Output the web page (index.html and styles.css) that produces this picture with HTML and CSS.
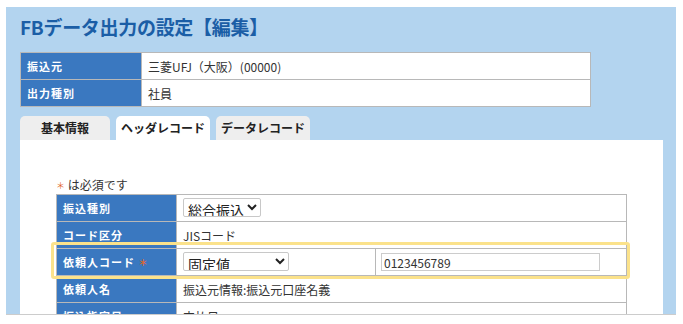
FILE: index.html
```html
<!DOCTYPE html>
<html lang="ja">
<head>
    <meta charset="UTF-8">
    <meta name="viewport" content="width=device-width, initial-scale=1.0">
    <title>FBデータ出力の設定【編集】</title>
    <link rel="stylesheet" href="styles.css">
</head>
<body>
    <div class="screen">
        <h1 class="page-title">FBデータ出力の設定【編集】</h1>

        <table class="info-table">
            <tr>
                <th>振込元</th>
                <td>三菱UFJ（大阪）(00000)</td>
            </tr>
            <tr>
                <th>出力種別</th>
                <td>社員</td>
            </tr>
        </table>

        <ul class="tabs">
            <li class="tab">基本情報</li>
            <li class="tab active">ヘッダレコード</li>
            <li class="tab">データレコード</li>
        </ul>

        <div class="tab-body">
            <p class="note"><span class="req">＊</span> は必須です</p>

            <div class="form-wrap">
                <table class="form-table">
                    <tr>
                        <th>振込種別</th>
                        <td colspan="2">
                            <select class="select-type">
                                <option>総合振込</option>
                            </select>
                        </td>
                    </tr>
                    <tr>
                        <th>コード区分</th>
                        <td colspan="2">JISコード</td>
                    </tr>
                    <tr>
                        <th>依頼人コード <span class="req">＊</span></th>
                        <td class="cell-select">
                            <select class="select-code">
                                <option>固定値</option>
                            </select>
                        </td>
                        <td>
                            <input type="text" class="code-input" value="0123456789">
                        </td>
                    </tr>
                    <tr>
                        <th>依頼人名</th>
                        <td colspan="2">振込元情報:振込元口座名義</td>
                    </tr>
                    <tr>
                        <th>振込指定日</th>
                        <td colspan="2">支払日</td>
                    </tr>
                </table>
                <!-- 注目枠 -->
                <div class="highlight"></div>
            </div>
        </div>
    </div>
</body>
</html>
```

FILE: styles.css
```css
body {
    margin: 0;
    padding: 7px 7px 0 6px;
    background-color: #fff;
    font-family: "Noto Sans CJK JP", "Noto Sans", sans-serif;
    color: #333;
}

.screen {
    box-sizing: border-box;
    width: 670px;
    height: 308px;
    padding: 0 13px 0 14px;
    background-color: #b3d4ef;
    border-bottom: 1px solid #ccc;
    overflow: hidden;
}

.page-title {
    margin: 0 0 11px;
    padding-top: 6px;
    font-size: 19px;
    line-height: 28px;
    letter-spacing: -0.3px;
    font-weight: bold;
    color: #1b5ea6;
}

table {
    border-collapse: collapse;
}

th,
td {
    height: 26px;
    padding: 0 6px;
    border: 1px solid #b8b8b8;
    font-size: 12px;
    text-align: left;
    vertical-align: middle;
}

th {
    background-color: #3a78c0;
    color: #fff;
    font-size: 11px;
    font-weight: bold;
    letter-spacing: 1px;
}

td {
    background-color: #fff;
    color: #333;
}

.info-table {
    width: 571px;
}

.info-table th {
    width: 108px;
}

.tabs {
    display: flex;
    gap: 6px;
    margin: 9px 0 0;
    padding: 0;
    list-style: none;
}

.tab {
    width: 90px;
    height: 24px;
    line-height: 24px;
    text-align: center;
    font-size: 12px;
    font-weight: bold;
    color: #222;
    background-color: #eee;
    border-radius: 5px 5px 0 0;
}

.tab + .tab {
    width: 94px;
}

.tab.active {
    background-color: #fff;
}

.tab-body {
    height: 200px;
    padding: 37px 36px 0;
    background-color: #fff;
}

.note {
    margin: 0;
    font-size: 12px;
    line-height: 16px;
    color: #333;
}

.req {
    font-size: 9px;
    color: #e2662c;
    vertical-align: 1px;
}

.form-wrap {
    position: relative;
    width: 571px;
}

.form-table {
    width: 571px;
}

.form-table th {
    width: 107px;
}

.form-table .cell-select {
    width: 186px;
}

select {
    height: 19px;
    padding: 0;
    font-family: "Noto Sans CJK JP", sans-serif;
    font-size: 14px;
    color: #222;
    background-color: #fff;
    border: 1px solid #c8c8c8;
    border-radius: 2px;
}

.select-code {
    width: 106px;
}

.code-input {
    box-sizing: border-box;
    width: 219px;
    height: 18px;
    margin-left: -1px;
    padding: 0 2px;
    font-family: "Noto Sans CJK JP", sans-serif;
    font-size: 12px;
    color: #333;
    border: 1px solid #ccc;
}

.highlight {
    position: absolute;
    top: 48px;
    left: -5px;
    width: 573px;
    height: 31px;
    border: 3px solid #fbe28b;
    border-radius: 3px;
    pointer-events: none;
}
```
